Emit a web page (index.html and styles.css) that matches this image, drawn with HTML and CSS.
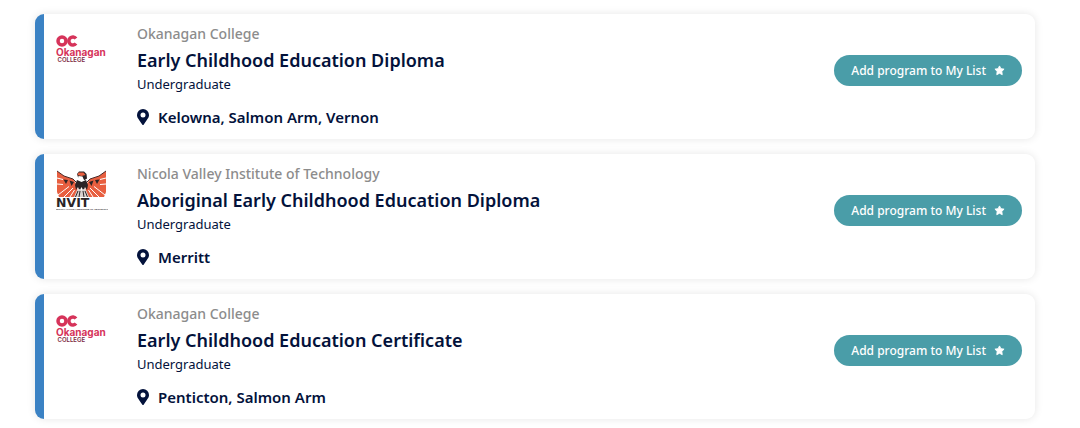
FILE: index.html
```html
<!DOCTYPE html>
<html lang="en">
<head>
    <meta charset="utf-8">
    <title>Programs</title>
    <meta name="viewport" content="width=device-width, initial-scale=1">
    <link rel="stylesheet" href="styles.css">
</head>
<body>
    <!-- shared icons and logos -->
    <svg class="sprite" aria-hidden="true">
        <symbol id="pin" viewBox="0 0 384 512">
            <path d="M172 502C27 291 0 270 0 192a192 192 0 0 1 384 0c0 78-27 99-172 310a24 24 0 0 1-40 0zM192 272a80 80 0 1 0 0-160 80 80 0 0 0 0 160z"/>
        </symbol>
        <symbol id="star" viewBox="0 0 24 24">
            <path d="M12 2l3 6 7 1-5 5 1 7-6-3-6 3 1-7-5-5 7-1z" stroke="currentColor" stroke-width="2" stroke-linejoin="round"/>
        </symbol>
        <symbol id="oc" viewBox="0 0 104 80">
            <g fill="none" stroke="#d6335a" stroke-width="7">
                <circle cx="12" cy="22" r="8"/>
                <path d="M40 17a8 8 0 1 0 0 10"/>
            </g>
            <text x="0" y="52" class="oc-name">Okanagan</text>
            <text x="3" y="64" class="oc-college">COLLEGE</text>
        </symbol>
        <symbol id="nvit" viewBox="0 0 104 80">
            <!-- wings -->
            <path fill="#e85f40" d="M2 2l14 10 18 6 8 12 2 24-38 0-4-10zM100 2l-14 10-18 6-8 12-2 24 38 0 4-10z"/>
            <path fill="none" stroke="#fff" stroke-width="2" d="M2 16l12 3M2 28l12 1M4 50l22-17M16 54l18-18M28 54l9-14M100 16l-12 3M100 28l-12 1M98 50l-22-17M86 54l-18-18M74 54l-9-14"/>
            <path fill="none" stroke="#4a2a28" stroke-width="2" d="M2 2l14 10 18 6 8 8M100 2l-14 10-18 6-8 8"/>
            <path fill="#2a2426" d="M15 19l9 1-4 8zM27 21l9 3-5 8zM87 19l-9 1 4 8zM75 21l-9 3 5 8z"/>
            <!-- head, body and tail -->
            <path fill="#2a2426" d="M42 8l4-5 10 0 5 5 1 9-6 4-10 0z"/>
            <path fill="#e85f40" d="M45 5l10 0 4 5-8 2-8-2z"/>
            <path fill="#fff" d="M45 12l8 1 2 5 3 4-8 2-7-3z"/>
            <path fill="#2a2426" d="M42 20l9 4 9-4 4 10-2 10-4-6-3 8-4-8-4 8-3-8-4 6-2-10z"/>
            <path fill="#d9d2cf" d="M42 40l5-2 4 3 4-3 5 2 6 14-30 0z"/>
            <path fill="none" stroke="#2a2426" stroke-width="2" d="M44 42l-5 12M48 42l-2 12M54 42l2 12M58 42l5 12"/>
            <text x="0" y="73" class="nvit-name">NVIT</text>
            <text x="0" y="79" class="nvit-full">NICOLA VALLEY INSTITUTE OF TECHNOLOGY</text>
        </symbol>
    </svg>

    <main class="results">
        <article class="card">
            <svg class="logo" role="img" aria-label="Okanagan College logo"><use href="#oc"/></svg>
            <div class="details">
                <p class="school">Okanagan College</p>
                <h2 class="title">Early Childhood Education Diploma</h2>
                <p class="level">Undergraduate</p>
                <p class="location"><svg class="pin"><use href="#pin"/></svg>Kelowna, Salmon Arm, Vernon</p>
            </div>
            <button type="button" class="addbtn">Add program to My List <svg class="star"><use href="#star"/></svg></button>
        </article>

        <article class="card">
            <svg class="logo" role="img" aria-label="NVIT logo"><use href="#nvit"/></svg>
            <div class="details">
                <p class="school">Nicola Valley Institute of Technology</p>
                <h2 class="title">Aboriginal Early Childhood Education Diploma</h2>
                <p class="level">Undergraduate</p>
                <p class="location"><svg class="pin"><use href="#pin"/></svg>Merritt</p>
            </div>
            <button type="button" class="addbtn">Add program to My List <svg class="star"><use href="#star"/></svg></button>
        </article>

        <article class="card">
            <svg class="logo" role="img" aria-label="Okanagan College logo"><use href="#oc"/></svg>
            <div class="details">
                <p class="school">Okanagan College</p>
                <h2 class="title">Early Childhood Education Certificate</h2>
                <p class="level">Undergraduate</p>
                <p class="location"><svg class="pin"><use href="#pin"/></svg>Penticton, Salmon Arm</p>
            </div>
            <button type="button" class="addbtn">Add program to My List <svg class="star"><use href="#star"/></svg></button>
        </article>
    </main>
</body>
</html>
```
FILE: styles.css
```css
body {
    margin: 0;
    background-color: #fff;
    color: #03123b;
    font-family: "Noto Sans", sans-serif;
}

.sprite {
    display: none;
}

.results {
    display: flex;
    flex-direction: column;
    gap: 15px;
    padding: 14px 45px 8px 35px;
}

.card {
    display: flex;
    align-items: flex-start;
    box-sizing: border-box;
    padding: 10px 13px 10px 12px;
    border-left: 9px solid #3b82c4;
    border-radius: 9px;
    background-color: #fff;
    box-shadow: 0 0 8px rgba(0, 0, 0, 0.1);
}

.logo {
    flex: none;
    width: 52px;
    height: 40px;
    margin: 6px 29px 0 0;
}

.details {
    flex: 1;
}

.details p,
.title {
    margin: 0;
}

.school {
    color: #8c8c8c;
    font-size: 14px;
    font-weight: 500;
    line-height: 20px;
}

.title {
    font-size: 18px;
    font-weight: 600;
    line-height: 32px;
}

.level {
    font-size: 13px;
    font-weight: 400;
    line-height: 17px;
}

.details .location {
    display: flex;
    align-items: center;
    gap: 9px;
    margin-top: 14px;
    font-size: 15px;
    font-weight: 600;
    line-height: 20px;
    padding-bottom: 2px;
}

.pin {
    width: 12px;
    height: 16px;
    fill: #03123b;
}

.addbtn {
    display: flex;
    align-items: center;
    gap: 8px;
    height: 31px;
    margin: 31px 0 0;
    padding: 0 17px;
    border: none;
    border-radius: 16px;
    background-color: #4a9da8;
    color: #fff;
    font-family: inherit;
    font-size: 12px;
    font-weight: 500;
    cursor: pointer;
}

.star {
    width: 11px;
    height: 11px;
    fill: #fff;
}

.oc-name {
    fill: #d6335a;
    font-family: Inter, sans-serif;
    font-size: 20px;
    font-weight: 700;
}

.oc-college {
    fill: #7d2940;
    font-family: Inter, sans-serif;
    font-size: 12px;
    font-weight: 600;
}

.nvit-name {
    fill: #2a2426;
    font-family: "DejaVu Sans", sans-serif;
    font-size: 25px;
    font-weight: 700;
}

.nvit-full {
    fill: #2a2426;
    font-family: "Liberation Sans", sans-serif;
    font-size: 5px;
    font-weight: 700;
}
```
